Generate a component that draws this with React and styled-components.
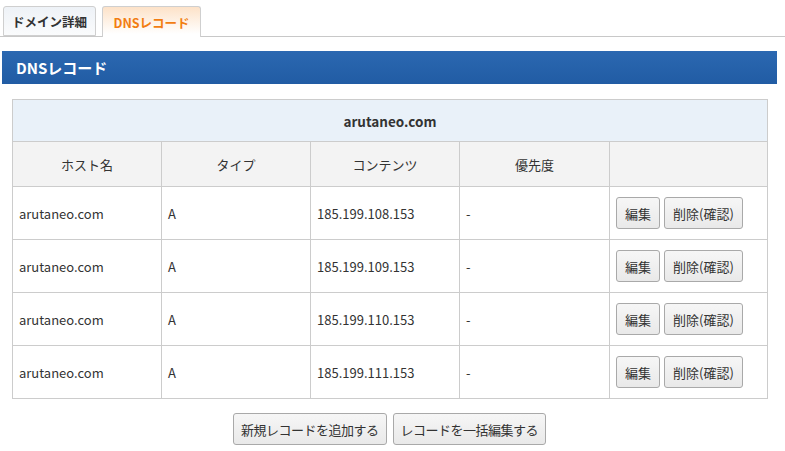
import React from 'react';
import styled, { createGlobalStyle } from 'styled-components';

const GlobalStyle = createGlobalStyle`
  body {
    margin: 0;
    background: #fff;
    color: #333;
    font-family: "Noto Sans CJK JP", "Noto Sans", sans-serif;
    font-size: 13px;
  }
`;

const Page = styled.div`
  width: 785px;
`;

const TabBar = styled.div`
  display: flex;
  gap: 6px;
  padding: 6px 0 0 3px;
  border-bottom: 1px solid #c8c8c8;
  height: 30px;
`;

const Tab = styled.div`
  display: flex;
  align-items: center;
  justify-content: center;
  width: ${({ w }) => w}px;
  height: ${({ active }) => (active ? 31 : 30)}px;
  box-sizing: border-box;
  border: 1px solid #cfcfcf;
  border-bottom: ${({ active }) => (active ? 'none' : '1px solid #cfcfcf')};
  border-radius: 3px 3px 0 0;
  font-size: 12.5px;
  font-weight: bold;
  color: ${({ active }) => (active ? '#f27d12' : '#333')};
  background: ${({ active }) =>
    active
      ? 'linear-gradient(to bottom, #fde2c8, #fff 90%)'
      : 'linear-gradient(to bottom, #eef2f7, #fafbfc)'};
`;

const SectionBar = styled.div`
  margin: 14px 8px 0 2px;
  height: 33px;
  display: flex;
  align-items: center;
  padding-left: 14px;
  background: linear-gradient(to bottom, #2b68b1, #215ca4);
  color: #fff;
  font-weight: bold;
  font-size: 15px;
`;

const Wrap = styled.div`
  padding: 15px 18px 0 12px;
`;

const Table = styled.table`
  width: 755px;
  border-collapse: collapse;
  table-layout: fixed;
`;

const Cell = styled.td`
  border: 1px solid #cccccc;
  padding: 0 6px;
  height: ${({ h }) => h}px;
  box-sizing: border-box;
  text-align: left;
  vertical-align: middle;
`;

const TitleCell = styled(Cell)`
  background: #e9f1f9;
  text-align: center;
  font-weight: bold;
  font-size: 13.5px;
`;

const HeadCell = styled(Cell).attrs({ as: 'th' })`
  background: #f3f3f3;
  text-align: center;
  font-weight: normal;
`;

const Actions = styled.div`
  display: flex;
  gap: 4px;
`;

const Button = styled.button`
  height: 32px;
  padding: 0 ${({ pad }) => pad}px;
  border: 1px solid #a9a9a9;
  border-radius: 3px;
  background: linear-gradient(to bottom, #f6f6f6, #e9e9e9);
  color: #333;
  font-family: inherit;
  font-size: 13px;
  letter-spacing: ${({ tight }) => (tight ? '-0.5px' : 'normal')};
  cursor: pointer;
`;

const Footer = styled.div`
  display: flex;
  justify-content: center;
  gap: 6px;
  width: 755px;
  margin-top: 14px;
`;

const records = ['185.199.108.153', '185.199.109.153', '185.199.110.153', '185.199.111.153'];

export default function App() {
  return (
    <Page>
      <GlobalStyle />
      <TabBar>
        <Tab w={93}>ドメイン詳細</Tab>
        <Tab w={99} active>DNSレコード</Tab>
      </TabBar>
      <SectionBar>DNSレコード</SectionBar>
      <Wrap>
        <Table>
          <colgroup>
            <col style={{ width: 149 }} />
            <col style={{ width: 149 }} />
            <col style={{ width: 149 }} />
            <col style={{ width: 150 }} />
            <col style={{ width: 158 }} />
          </colgroup>
          <tbody>
            <tr>
              <TitleCell h={42} colSpan={5}>arutaneo.com</TitleCell>
            </tr>
            <tr>
              <HeadCell h={45}>ホスト名</HeadCell>
              <HeadCell h={45}>タイプ</HeadCell>
              <HeadCell h={45}>コンテンツ</HeadCell>
              <HeadCell h={45}>優先度</HeadCell>
              <HeadCell h={45}></HeadCell>
            </tr>
            {records.map((ip) => (
              <tr key={ip}>
                <Cell h={53}>arutaneo.com</Cell>
                <Cell h={53}>A</Cell>
                <Cell h={53}>{ip}</Cell>
                <Cell h={53}>-</Cell>
                <Cell h={53}>
                  <Actions>
                    <Button pad={8}>編集</Button>
                    <Button pad={8}>削除(確認)</Button>
                  </Actions>
                </Cell>
              </tr>
            ))}
          </tbody>
        </Table>
        <Footer>
          <Button pad={7} tight>新規レコードを追加する</Button>
          <Button pad={7} tight>レコードを一括編集する</Button>
        </Footer>
      </Wrap>
    </Page>
  );
}
